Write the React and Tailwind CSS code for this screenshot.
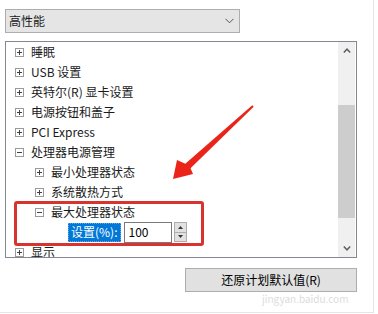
import React from "react";

const font = { fontFamily: '"Noto Sans CJK SC", "Noto Sans", sans-serif' };

const Expander = ({ open }) => (
  <svg width="9" height="9" viewBox="0 0 9 9" className="shrink-0">
    <rect x="0.5" y="0.5" width="8" height="8" fill="#fff" stroke="#9a9a9a" />
    <path d="M2 4.5h5" stroke="#404040" />
    {!open && <path d="M4.5 2v5" stroke="#404040" />}
  </svg>
);

const TreeRow = ({ level, open, children }) => (
  <div
    className={`flex h-[20px] items-center text-[12px] text-[#1a1a1a] ${
      level === 0 ? "pl-[9px]" : "pl-[29px]"
    }`}
  >
    <Expander open={open} />
    <span className="ml-[7px] whitespace-nowrap leading-none">{children}</span>
  </div>
);

const App = () => {
  const rows = [
    { level: 0, label: "睡眠" },
    { level: 0, label: "USB 设置" },
    { level: 0, label: "英特尔(R) 显卡设置" },
    { level: 0, label: "电源按钮和盖子" },
    { level: 0, label: "PCI Express" },
    { level: 0, label: "处理器电源管理", open: true },
    { level: 1, label: "最小处理器状态" },
    { level: 1, label: "系统散热方式" },
    { level: 1, label: "最大处理器状态", open: true },
  ];

  return (
    <div className="relative h-[314px] w-[378px] overflow-hidden bg-white" style={font}>
      <div className="h-[313px] w-[374px] border-r border-b border-[#e6e6e6] pl-[5px] pt-[9px]">
        {/* plan dropdown */}
        <div className="flex h-[24px] w-[235px] items-center justify-between border border-[#adadad] bg-[#e5e5e5] pl-[3px] pr-[5px] text-[12px] text-[#1a1a1a]">
          <span>高性能</span>
          <svg width="9" height="6" viewBox="0 0 9 6">
            <path d="M0.5 0.8L4.5 4.8L8.5 0.8" fill="none" stroke="#555" strokeWidth="1" />
          </svg>
        </div>

        {/* settings tree */}
        <div className="mt-[8px] flex h-[217px] w-[352px] overflow-hidden border border-[#828790] bg-white">
          <div className="flex-1 overflow-hidden">
            {rows.map((r) => (
              <TreeRow key={r.label} level={r.level} open={r.open}>
                {r.label}
              </TreeRow>
            ))}
            <div className="flex h-[20px] items-center pl-[62px] text-[12px]">
              <span className="flex h-[19px] items-center border border-dotted border-[#6aa8e0] bg-[#0078d7] px-[2px] text-white">
                设置(%):
              </span>
              <div className="ml-[3px] flex h-[21px] w-[48px] items-center border border-[#7a7a7a] bg-white pl-[4px] text-[12px] text-black">
                100
              </div>
              <div className="ml-[2px] flex h-[20px] w-[13px] flex-col border border-[#adadad] bg-[#e1e1e1]">
                <div className="flex flex-1 items-center justify-center border-b border-[#adadad]">
                  <svg width="5" height="3" viewBox="0 0 5 3">
                    <path d="M0 3L2.5 0L5 3Z" fill="#333" />
                  </svg>
                </div>
                <div className="flex flex-1 items-center justify-center">
                  <svg width="5" height="3" viewBox="0 0 5 3">
                    <path d="M0 0L2.5 3L5 0Z" fill="#333" />
                  </svg>
                </div>
              </div>
            </div>
            <TreeRow level={0}>显示</TreeRow>
          </div>

          {/* scrollbar */}
          <div className="mr-[1px] flex w-[17px] flex-col bg-[#f0f0f0]">
            <div className="flex h-[17px] items-center justify-center">
              <svg width="8" height="5" viewBox="0 0 8 5">
                <path d="M0.8 4.5L4 1.2L7.2 4.5" fill="none" stroke="#606060" strokeWidth="1.5" />
              </svg>
            </div>
            <div className="mt-[46px] h-[113px] bg-[#cdcdcd]" />
            <div className="flex-1" />
            <div className="flex h-[17px] items-center justify-center">
              <svg width="8" height="5" viewBox="0 0 8 5">
                <path d="M0.8 0.5L4 3.8L7.2 0.5" fill="none" stroke="#606060" strokeWidth="1.5" />
              </svg>
            </div>
          </div>
        </div>

        {/* restore button */}
        <div className="mt-[10px] flex">
          <button className="ml-[180px] flex h-[24px] w-[172px] items-center justify-center border border-[#adadad] bg-[#e1e1e1] text-[12px] text-black">
            还原计划默认值(R)
          </button>
        </div>
      </div>

      {/* annotation: red highlight box */}
      <div className="absolute left-[14px] top-[201px] h-[45px] w-[190px] rounded-[3px] border-[3px] border-[#d8332e]" />

      {/* annotation: red arrow */}
      <svg className="absolute left-0 top-0" width="378" height="314" viewBox="0 0 378 314">
        <polygon
          points="252.3,105.3 253.7,106.7 190.5,168.2 193,174 173,179 177,160 185.3,163.8"
          fill="#ea2418"
        />
      </svg>

      {/* watermark */}
      <div className="absolute left-[262px] top-[294px] text-[10px] leading-none text-[#dcdcdc]">
        jingyan.baidu.com
      </div>
    </div>
  );
};

export default App;
